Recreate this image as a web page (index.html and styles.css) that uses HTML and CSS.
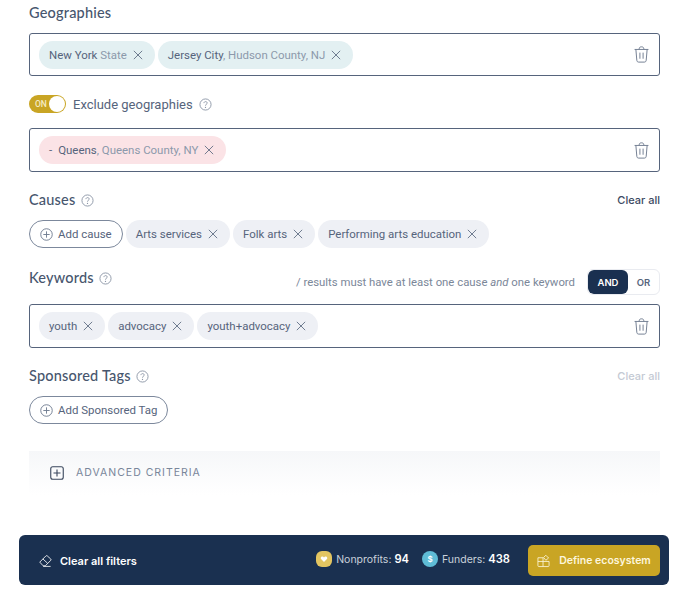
FILE: index.html
```html
<!DOCTYPE html>
<html lang="en">
<head>
<meta charset="utf-8">
<title>Filters</title>
<link rel="stylesheet" href="styles.css">
</head>
<body>
<svg class="defs" width="0" height="0" aria-hidden="true">
  <symbol id="x" viewBox="0 0 12 12"><path d="M1 1l10 10M11 1L1 11" fill="none" stroke="currentColor" stroke-width="1"/></symbol>
  <symbol id="q" viewBox="0 0 14 14"><circle cx="7" cy="7" r="6" fill="none" stroke="currentColor" stroke-width="1"/><path d="M5.300 5.500C5.400 3.300 8.800 3.400 8.800 5.400 8.800 6.700 7 6.800 7 8.300" fill="none" stroke="currentColor"/><circle cx="7" cy="10.200" r=".7" fill="currentColor"/></symbol>
  <symbol id="plus" viewBox="0 0 14 14"><circle cx="7" cy="7" r="6.200" fill="none" stroke="currentColor"/><path d="M7 3.600v6.800M3.600 7h6.800" fill="none" stroke="currentColor"/></symbol>
  <symbol id="trash" viewBox="0 0 16 18"><path d="M.6 3.600h14.800M2 3.600l1 11.600c.1 1.200.8 1.900 2 1.900h6c1.200 0 1.900-.7 2-1.900l1-11.600M5.500 3.400C5.500 1.600 6.300.8 8 .8s2.500.8 2.500 2.600M6.300 7v6.500M9.700 7v6.500" fill="none" stroke="currentColor" stroke-width="1"/></symbol>
</svg>
<main class="page">
  <h2 class="title title-first">Geographies</h2>
  <div class="box box-first">
    <div class="chips">
      <span class="chip chip-geo"><span>New York <em class="muted">State</em></span><svg class="x"><use href="#x"/></svg></span>
      <span class="chip chip-geo"><span>Jersey City<em class="muted">, Hudson County, NJ</em></span><svg class="x"><use href="#x"/></svg></span>
    </div>
    <svg class="trash"><use href="#trash"/></svg>
  </div>

  <div class="exclude">
    <span class="toggle"><span class="toggle-text">ON</span><span class="knob"></span></span>
    <span class="exclude-label">Exclude geographies</span>
    <svg class="q"><use href="#q"/></svg>
  </div>
  <div class="box box-second">
    <div class="chips">
      <span class="chip chip-ex"><span><span class="dash">-</span>Queens<em class="muted">, Queens County, NY</em></span><svg class="x"><use href="#x"/></svg></span>
    </div>
    <svg class="trash"><use href="#trash"/></svg>
  </div>

  <div class="row row-causes">
    <div class="title-wrap"><h2 class="title">Causes</h2><svg class="q"><use href="#q"/></svg></div>
    <a class="clear">Clear all</a>
  </div>
  <div class="chips chips-free">
    <span class="chip chip-add"><svg class="plus"><use href="#plus"/></svg>Add cause</span>
    <span class="chip chip-plain">Arts services<svg class="x"><use href="#x"/></svg></span>
    <span class="chip chip-plain">Folk arts<svg class="x"><use href="#x"/></svg></span>
    <span class="chip chip-plain">Performing arts education<svg class="x"><use href="#x"/></svg></span>
  </div>

  <div class="row row-keywords">
    <div class="title-wrap title-raised"><h2 class="title">Keywords</h2><svg class="q"><use href="#q"/></svg></div>
    <div class="logic">
      <span class="logic-note">/ results must have at least one cause <i>and</i> one keyword</span>
      <span class="switch"><b class="switch-on">AND</b><b class="switch-off">OR</b></span>
    </div>
  </div>
  <div class="box box-keywords">
    <div class="chips">
      <span class="chip chip-plain">youth<svg class="x"><use href="#x"/></svg></span>
      <span class="chip chip-plain">advocacy<svg class="x"><use href="#x"/></svg></span>
      <span class="chip chip-plain">youth+advocacy<svg class="x"><use href="#x"/></svg></span>
    </div>
    <svg class="trash"><use href="#trash"/></svg>
  </div>

  <div class="row row-tags">
    <div class="title-wrap"><h2 class="title">Sponsored Tags</h2><svg class="q"><use href="#q"/></svg></div>
    <a class="clear clear-off">Clear all</a>
  </div>
  <div class="chips chips-free">
    <span class="chip chip-add"><svg class="plus"><use href="#plus"/></svg>Add Sponsored Tag</span>
  </div>

  <div class="advanced">
    <svg class="adv-icon" viewBox="0 0 14 14"><rect x=".75" y=".75" width="12.500" height="12.500" rx="2" fill="none" stroke="currentColor" stroke-width="1.100"/><path d="M7 3.500v7M3.500 7h7" fill="none" stroke="currentColor" stroke-width="1.100"/></svg>
    <span class="adv-text">ADVANCED CRITERIA</span>
  </div>
</main>

<footer class="bar">
  <div class="bar-clear">
    <svg class="eraser" viewBox="0 0 14 14"><path d="M.8 8.200L7.500 1.500c.4-.4 1-.4 1.400 0l3.800 3.400c.4.400.4 1 0 1.400L6.700 12.200H4.500L.8 8.200zM4.200 4.800l5 4.600M4.500 12.800h8" fill="none" stroke="currentColor" stroke-width=".9"/></svg>
    <span>Clear all filters</span>
  </div>
  <div class="bar-right">
    <div class="stat">
      <span class="badge badge-gold"><svg viewBox="0 0 10 10" class="badge-glyph"><path d="M5 8.800L1.300 5C-.3 2.800 3.200 .6 5 3c1.800-2.400 5.300-.2 3.700 2z" fill="#fff"/></svg></span>
      <span class="stat-text">Nonprofits: <b>94</b></span>
    </div>
    <div class="stat">
      <span class="badge badge-blue"><span class="dollar">$</span></span>
      <span class="stat-text">Funders: <b>438</b></span>
    </div>
    <button class="define">
      <svg class="gift" viewBox="0 0 14 14"><path d="M1 3.500h5.500V13H2c-.6 0-1-.4-1-1zM6.500 7.500H13V12c0 .6-.4 1-1 1H6.500M1 7.500h5.500M9.500 .8l3 3-3 2.400-2.400-3z" fill="none" stroke="currentColor" stroke-width=".9"/></svg>
      <span>Define ecosystem</span>
    </button>
  </div>
</footer>
</body>
</html>
```
FILE: styles.css
```css
* { box-sizing: border-box; }
html, body { margin: 0; padding: 0; }
body {
  width: 688px;
  height: 601px;
  overflow: hidden;
  background: #fff;
  font-family: "Roboto", "Liberation Sans", sans-serif;
  color: #4a5a73;
}
.defs { position: absolute; }
.page { padding: 0 28px 0 29px; }
.title {
  margin: 0;
  font-family: "Lato", "Inter", sans-serif;
  font-size: 14.500px;
  font-weight: 500;
  line-height: 20px;
  color: #47566e;
  letter-spacing: .2px;
}
.title-first { padding-top: 3px; height: 33px; }
.box {
  height: 44px;
  border: 1px solid #56647c;
  border-radius: 3px;
  padding: 0 9px;
  display: flex;
  align-items: center;
  justify-content: space-between;
}
.box-first { height: 43px; }
.box-second { margin-top: 15px; }
.chips { display: flex; align-items: center; gap: 3px; }
.chip {
  height: 28px;
  border-radius: 14px;
  padding: 0 12px 0 10px;
  display: inline-flex;
  align-items: center;
  gap: 6px;
  font-size: 11.450px;
  white-space: nowrap;
  color: #56647c;
}
.chip em { font-style: normal; color: #8c99ab; }
.chip-geo { background: #e3f0f2; }
.chip-ex { background: #fbe3e6; }
.chip-plain { background: #eef0f5; }
.chip-add {
  background: #fff;
  border: 1px solid #7c889c;
  padding: 0 10px;
  gap: 5px;
}
.dash { margin-right: 6px; }
.x { width: 10px; height: 10px; flex: none; color: #56647c; }
.q { width: 13px; height: 13px; flex: none; color: #8c96a6; }
.plus { width: 13px; height: 13px; flex: none; color: #6e7b90; }
.trash { width: 15px; height: 17px; flex: none; color: #6e7a8e; margin-right: 1px; }
.exclude {
  display: flex;
  align-items: center;
  margin-top: 19px;
  height: 18px;
}
.toggle {
  width: 37px;
  height: 18px;
  border-radius: 9px;
  background: #c9a524;
  position: relative;
  display: flex;
  align-items: center;
  padding-left: 6px;
}
.toggle-text { font-size: 8.500px; color: #f6ecc5; font-weight: 500; }
.knob {
  position: absolute;
  right: 1px;
  top: 1px;
  width: 16px;
  height: 16px;
  border-radius: 50%;
  background: #fff;
}
.exclude-label {
  margin: 0 6px 0 7px;
  font-size: 13px;
  color: #56647c;
}
.row {
  display: flex;
  align-items: center;
  justify-content: space-between;
}
.row-causes { margin-top: 18px; height: 20px; margin-bottom: 10px; }
.row-keywords { margin-top: 21px; height: 26px; margin-bottom: 9px; }
.row-tags { margin-top: 18px; height: 20px; margin-bottom: 10px; }
.title-wrap { display: flex; align-items: center; gap: 5px; }
.title-raised { align-self: flex-start; margin-top: -1px; }
.clear { font-size: 11px; font-weight: 500; color: #3c4a63; font-family: "Inter", sans-serif; }
.clear-off { color: #c4cad4; }
.logic { display: flex; align-items: center; gap: 12px; }
.logic-note { font-size: 11.350px; color: #7b8799; }
.switch {
  display: flex;
  width: 73px;
  height: 26px;
  border: 1px solid #e9ebf0;
  border-radius: 6px;
  overflow: hidden;
}
.switch b {
  display: flex;
  align-items: center;
  justify-content: center;
  font-family: "Inter", sans-serif;
  font-size: 9.500px;
  font-weight: 600;
}
.switch-on { width: 40px; background: #1a3050; color: #fff; border-radius: 6px; }
.switch-off { flex: 1; color: #56647c; }
.chips-free { gap: 3px; }
.advanced {
  margin-top: 27px;
  height: 44px;
  display: flex;
  align-items: center;
  gap: 12px;
  padding: 0 0 1px 21px;
  background: linear-gradient(#f6f7f9, #fff);
}
.adv-icon { width: 14px; height: 14px; color: #39465c; }
.adv-text { font-family: "Inter", sans-serif; font-size: 10.500px; letter-spacing: 1px; color: #79869a; }
.bar {
  margin: 40px 0 0 19px;
  width: 650px;
  height: 50px;
  border-radius: 6px;
  background: #1a3050;
  color: #fff;
  display: flex;
  align-items: center;
  justify-content: space-between;
  padding: 1px 9px 0 20px;
  font-family: "Inter", sans-serif;
}
.bar-clear {
  display: flex;
  align-items: center;
  gap: 8px;
  font-size: 11px;
  font-weight: 600;
}
.eraser { width: 13px; height: 14px; color: #fff; }
.bar-right { display: flex; align-items: center; }
.stat { display: flex; align-items: center; gap: 4px; margin-right: 13px; margin-top: -3px; }
.stat + .stat { margin-right: 18px; }
.badge {
  width: 16px;
  height: 16px;
  border-radius: 6px;
  display: flex;
  align-items: center;
  justify-content: center;
}
.badge-gold { background: #e3c561; }
.badge-blue { background: #5fbcd6; border-radius: 8px; }
.badge-glyph { width: 8px; height: 8px; }
.dollar { font-size: 8px; color: #fff; font-weight: 600; }
.stat-text { font-size: 10.500px; color: #c9d0da; }
.stat-text b { color: #fff; font-weight: 600; font-size: 11.200px; }
.define {
  width: 132px;
  height: 31px;
  border: 0;
  border-radius: 5px;
  background: #c9a524;
  color: #fdf6dc;
  display: flex;
  align-items: center;
  justify-content: center;
  gap: 9px;
  font-family: inherit;
  font-size: 10.500px;
  font-weight: 600;
}
.gift { width: 13px; height: 14px; }
```
